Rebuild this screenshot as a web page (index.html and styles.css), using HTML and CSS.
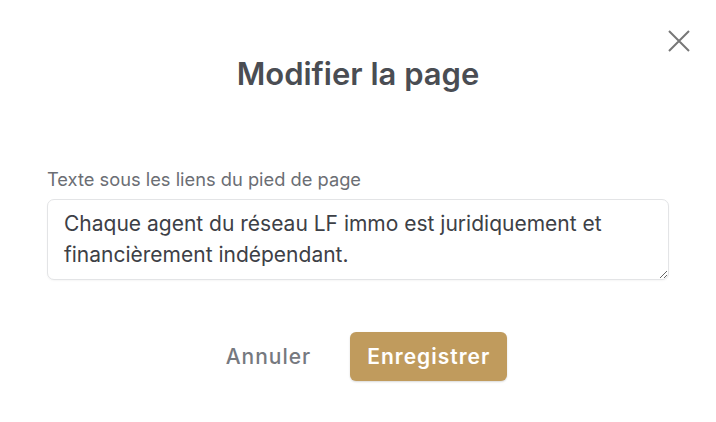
FILE: index.html
```html
<!DOCTYPE html>
<html lang="fr">
<head>
<meta charset="utf-8">
<link rel="stylesheet" href="styles.css">
</head>
<body>
<div class="modal">
  <button class="close" aria-label="Fermer">
    <svg width="22" height="22" viewBox="0 0 22 22"><path d="M1 1L21 21M21 1L1 21" stroke="#777" stroke-width="2" fill="none"/></svg>
  </button>
  <h1 class="title">Modifier la page</h1>
  <div class="field">
    <label class="label">Texte sous les liens du pied de page</label>
    <textarea class="input">Chaque agent du réseau LF immo est juridiquement et financièrement indépendant.</textarea>
  </div>
  <div class="actions">
    <button class="cancel">Annuler</button>
    <button class="save">Enregistrer</button>
  </div>
</div>
</body>
</html>
```
FILE: styles.css
```css
* { box-sizing: border-box; }
html, body { margin: 0; padding: 0; background: #fff; }
body { font-family: Inter, "Noto Sans", sans-serif; width: 716px; height: 422px; overflow: hidden; }
.modal { position: relative; padding: 55px 47px 0 47px; }
.close { position: absolute; top: 30px; right: 26px; border: 0; background: none; padding: 0; width: 22px; height: 22px; display: flex; cursor: pointer; }
.title { margin: 0; text-align: center; font-size: 31px; font-weight: 600; color: #4a4d53; line-height: 38px; }
.field { margin-top: 74px; display: flex; flex-direction: column; }
.label { font-size: 18.3px; color: #6b6e74; line-height: 24px; margin-bottom: 8px; }
.input { width: 622px; height: 81px; border: 1px solid #e3e4e6; border-radius: 7px; padding: 8px 16px; font-family: Inter, sans-serif; font-size: 21px; line-height: 31px; color: #3d4046; resize: vertical; box-shadow: 0 1px 2px rgba(0,0,0,0.04); }
.actions { margin-top: 52px; padding-left: 17px; display: flex; justify-content: center; gap: 39px; align-items: center; }
.cancel { border: 0; background: none; font-family: Inter, sans-serif; font-size: 21px; font-weight: 500; color: #76797f; letter-spacing: 1px; padding: 0; }
.save { border: 0; background: #c09b5d; color: #fff; font-family: Inter, sans-serif; font-size: 21px; font-weight: 600; letter-spacing: 1px; padding: 0 17px; height: 49px; border-radius: 6px; box-shadow: 0 1px 2px rgba(0,0,0,0.15); }
```
